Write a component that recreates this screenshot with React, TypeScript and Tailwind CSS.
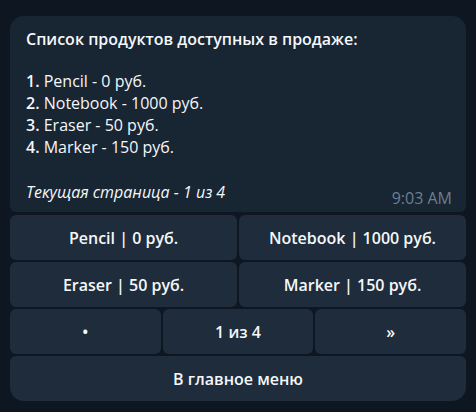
const products = [
  { name: "Pencil", price: 0 },
  { name: "Notebook", price: 1000 },
  { name: "Eraser", price: 50 },
  { name: "Marker", price: 150 },
];

const btn =
  "flex items-center justify-center h-[45px] bg-[#1f2c3b] text-[#f5f7fa] text-[16px] font-semibold";

export default function App() {
  return (
    <div
      className="w-[476px] h-[412px] bg-[#0e1621] px-[10px] pt-[16px]"
      style={{ fontFamily: '"Open Sans", "Noto Sans", sans-serif' }}
    >
      <div className="bg-[#182533] rounded-t-[14px] rounded-b-[6px] pl-[16px] pr-[14px] pt-[12px] pb-[9px] text-[16px] leading-[22px] text-[#f5f7fa]">
        <p className="font-semibold">Список продуктов доступных в продаже:</p>
        <div className="h-[20px]" />
        {products.map((p, i) => (
          <p key={p.name}>
            <span className="font-semibold">{i + 1}.</span> {p.name} - {p.price} руб.
          </p>
        ))}
        <div className="h-[23px]" />
        <div className="flex items-end justify-between">
          <p className="italic">Текущая страница - 1 из 4</p>
          <span className="text-[16px] text-[#6d7f8f] leading-[18px] translate-y-[4px]">9:03 AM</span>
        </div>
      </div>

      <div className="mt-[3px] flex flex-col gap-[2px]">
        <div className="grid grid-cols-2 gap-[2px]">
          <div className={`${btn} rounded-[6px]`}>Pencil | 0 руб.</div>
          <div className={`${btn} rounded-[6px]`}>Notebook | 1000 руб.</div>
        </div>
        <div className="grid grid-cols-2 gap-[2px]">
          <div className={`${btn} rounded-[6px]`}>Eraser | 50 руб.</div>
          <div className={`${btn} rounded-[6px]`}>Marker | 150 руб.</div>
        </div>
        <div className="grid grid-cols-3 gap-[2px]">
          <div className={`${btn} rounded-[6px]`}>•</div>
          <div className={`${btn} rounded-[6px]`}>1 из 4</div>
          <div className={`${btn} rounded-[6px]`}>»</div>
        </div>
        <div className={`${btn} rounded-t-[6px] rounded-b-[14px]`}>В главное меню</div>
      </div>
    </div>
  );
}
